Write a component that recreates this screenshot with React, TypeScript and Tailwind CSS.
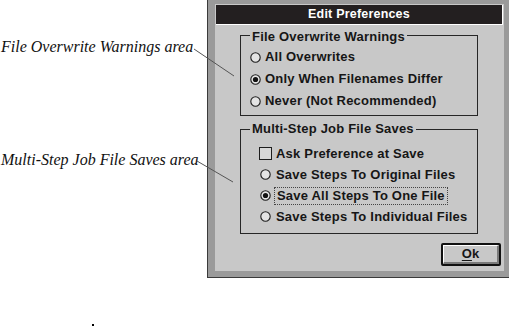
import React from "react";

function Radio({ checked }: { checked?: boolean }) {
  return (
    <svg width="11" height="11" viewBox="0 0 11 11" className="shrink-0">
      <circle cx="5.5" cy="5.5" r="4.7" fill="#e4e4e4" stroke="#1e1e1e" strokeWidth="1.1" />
      {checked && <circle cx="5.5" cy="5.5" r="2.6" fill="#111" />}
    </svg>
  );
}

function Checkbox() {
  return <div className="w-[13px] h-[13px] shrink-0 border border-[#1e1e1e] bg-[#d8d8d8]" />;
}

export default function App() {
  return (
    <div className="relative w-[509px] h-[327px] bg-white overflow-hidden">
      <div className="flex">
        {/* Callout captions */}
        <div className="w-[207px] shrink-0 pt-[37px] pl-[1px] text-[16px] leading-[20px] italic text-[#111] [font-family:'Liberation_Serif',serif]">
          <div>File Overwrite Warnings area</div>
          <div className="mt-[93px]">Multi-Step Job File Saves area</div>
        </div>

        {/* Dialog window */}
        <div className="w-[302px] h-[278px] bg-[#9a9a9a] border-l border-b border-[#3a3a3a] pt-[4px] pl-[7px] pr-[5px] pb-[6px] [font-family:'Liberation_Sans',Arial,sans-serif]">
          <div className="h-full bg-[#c8c8c8] pt-[1px] px-[1px] flex flex-col">
            <div className="h-[20px] bg-[#231f20] border-r border-b border-white flex items-center justify-center text-white text-[12.5px] font-bold tracking-[0.2px]">
              Edit Preferences
            </div>

            <div className="flex flex-col pl-[24px] pr-[25px] text-[13px] font-bold tracking-[0.2px] text-[#161616]">
              {/* File Overwrite Warnings */}
              <div className="relative mt-[10px] h-[81px] border border-[#262626] pt-[10px] pl-[9px] leading-[14px]">
                <div className="absolute -top-[6px] left-[9px] px-[2px] bg-[#c8c8c8]">File Overwrite Warnings</div>
                <div className="h-[22px] flex items-center gap-[4px]">
                  <Radio />
                  <span>All Overwrites</span>
                </div>
                <div className="h-[22px] flex items-center gap-[4px]">
                  <Radio checked />
                  <span>Only When Filenames Differ</span>
                </div>
                <div className="h-[22px] flex items-center gap-[4px]">
                  <Radio />
                  <span>Never (Not Recommended)</span>
                </div>
              </div>

              {/* Multi-Step Job File Saves */}
              <div className="relative mt-[13px] h-[105px] border border-[#262626] pt-[13px] pl-[18px] leading-[14px]">
                <div className="absolute -top-[8px] left-[9px] px-[2px] bg-[#c8c8c8]">Multi-Step Job File Saves</div>
                <div className="h-[21px] flex items-center gap-[4px]">
                  <Checkbox />
                  <span>Ask Preference at Save</span>
                </div>
                <div className="h-[21px] flex items-center gap-[4px]">
                  <div className="w-[13px] flex justify-center"><Radio /></div>
                  <span>Save Steps To Original Files</span>
                </div>
                <div className="h-[21px] flex items-center gap-[2px]">
                  <div className="w-[13px] flex justify-center"><Radio checked /></div>
                  <span className="px-[2px] py-[1px] border border-dotted border-[#444]">Save All Steps To One File</span>
                </div>
                <div className="h-[21px] flex items-center gap-[4px]">
                  <div className="w-[13px] flex justify-center"><Radio /></div>
                  <span>Save Steps To Individual Files</span>
                </div>
              </div>
            </div>

            <div className="flex justify-end pr-[2px] mt-[9px]">
              <button className="w-[60px] h-[23px] rounded-[2px] border-2 border-[#111] bg-[#c8c8c8] flex">
                <span className="flex-1 flex items-center justify-center border-t border-l border-white border-r-2 border-b-2 border-r-[#7a7a7a] border-b-[#7a7a7a] text-[13px] font-bold text-[#161616]">
                  <span className="underline underline-offset-2">O</span>k
                </span>
              </button>
            </div>
          </div>
        </div>
      </div>

      <div className="pl-[92px] pt-[46px]">
        <div className="w-[2px] h-[2px] bg-black" />
      </div>

      {/* Callout leader lines */}
      <svg className="absolute inset-0 pointer-events-none" width="509" height="327">
        <line x1="194" y1="49" x2="234" y2="76" stroke="#555" strokeWidth="1" />
        <line x1="197" y1="161" x2="233" y2="182" stroke="#555" strokeWidth="1" />
      </svg>
    </div>
  );
}
